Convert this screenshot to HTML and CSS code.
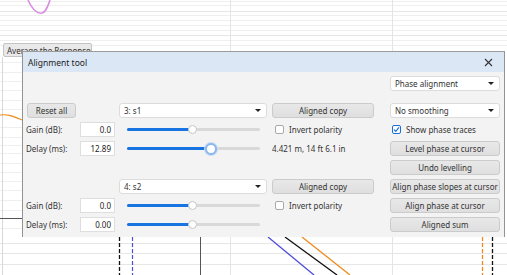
FILE: index.html
```html
<!DOCTYPE html>
<html lang="en">
<head>
<meta charset="UTF-8" />
<meta name="viewport" content="width=device-width, initial-scale=1" />
<title>Alignment tool</title>
<link rel="stylesheet" href="styles.css">
</head>
<body>
<div class="plot">
  <!-- the graph behind the dialog -->
  <svg class="chart" width="507" height="275" viewBox="0 0 507 275">
    <g stroke="#efefef" stroke-width="1">
      <line x1="0" y1="1.5" x2="507" y2="1.5"/>
      <line x1="0" y1="5.5" x2="507" y2="5.5"/>
      <line x1="0" y1="11.5" x2="507" y2="11.5" stroke="#e6e6e6"/>
      <line x1="0" y1="15.5" x2="507" y2="15.5"/>
      <line x1="0" y1="20.5" x2="507" y2="20.5"/>
      <line x1="0" y1="25.5" x2="507" y2="25.5"/>
      <line x1="0" y1="30.5" x2="507" y2="30.5"/>
      <line x1="0" y1="35.5" x2="507" y2="35.5" stroke="#e6e6e6"/>
      <line x1="0" y1="40.5" x2="507" y2="40.5"/>
      <line x1="0" y1="45.5" x2="507" y2="45.5"/>
      <line x1="0" y1="62.5" x2="22" y2="62.5"/>
      <line x1="0" y1="72.5" x2="22" y2="72.5"/>
      <line x1="0" y1="81.5" x2="22" y2="81.5"/>
      <line x1="0" y1="90.5" x2="22" y2="90.5"/>
      <line x1="0" y1="100.5" x2="22" y2="100.5"/>
      <line x1="0" y1="109.5" x2="22" y2="109.5"/>
      <line x1="0" y1="127.5" x2="22" y2="127.5"/>
      <line x1="0" y1="137.5" x2="22" y2="137.5"/>
      <line x1="0" y1="145.5" x2="22" y2="145.5"/>
      <line x1="0" y1="153.5" x2="22" y2="153.5"/>
      <line x1="0" y1="163.5" x2="22" y2="163.5"/>
      <line x1="0" y1="172.5" x2="22" y2="172.5"/>
      <line x1="0" y1="181.5" x2="22" y2="181.5"/>
      <line x1="0" y1="190.5" x2="22" y2="190.5"/>
      <line x1="0" y1="200.5" x2="22" y2="200.5"/>
      <line x1="0" y1="210.5" x2="22" y2="210.5"/>
      <line x1="0" y1="228.5" x2="22" y2="228.5"/>
      <line x1="0" y1="243.5" x2="507" y2="243.5" stroke="#e6e6e6"/>
      <line x1="0" y1="253.5" x2="507" y2="253.5" stroke="#e6e6e6"/>
      <line x1="0" y1="264.5" x2="507" y2="264.5" stroke="#e6e6e6"/>
      <line x1="230.5" y1="0" x2="230.5" y2="275" stroke="#e4e4e4"/>
      <line x1="392.5" y1="0" x2="392.5" y2="275" stroke="#e4e4e4"/>
      <line x1="2.5" y1="57" x2="2.5" y2="275" stroke="#d8d8d8"/>
    </g>
    <line x1="0" y1="218.5" x2="22" y2="218.5" stroke="#555"/>
    <line x1="200.5" y1="237" x2="200.5" y2="275" stroke="#555"/>
    <path d="M28 0 C32 9 37 14 42 13 C46 12 48 6 50 0" fill="none" stroke="#d98ae0" stroke-width="1.5"/>
    <path d="M0 115 C8 114 12 116 22 120" fill="none" stroke="#f08a1c" stroke-width="1.2"/>
    <line x1="119.5" y1="237" x2="119.5" y2="275" stroke="#111" stroke-width="1.3" stroke-dasharray="4 2"/>
    <line x1="132.5" y1="237" x2="132.5" y2="275" stroke="#4d4ddd" stroke-width="1.2" stroke-dasharray="4 2"/>
    <line x1="482.5" y1="237" x2="482.5" y2="275" stroke="#f08a1c" stroke-width="1.3" stroke-dasharray="4 2"/>
    <line x1="492.5" y1="237" x2="492.5" y2="275" stroke="#111" stroke-width="1.3" stroke-dasharray="4 2"/>
    <line x1="268" y1="237" x2="314" y2="275" stroke="#4d4ddd" stroke-width="1.3"/>
    <line x1="285" y1="237" x2="337" y2="275" stroke="#111" stroke-width="1.3"/>
    <line x1="302" y1="237" x2="350" y2="275" stroke="#f08a1c" stroke-width="1.3"/>
  </svg>

  <button class="avg-btn">Average the Responses</button>

  <section class="dialog">
    <header class="titlebar">
      <span>Alignment tool</span>
      <svg class="close" width="9" height="9" viewBox="0 0 9 9"><path d="M1 1 L8 8 M8 1 L1 8" stroke="#333" stroke-width="1.1"/></svg>
    </header>
    <div class="dialog-body">
      <div class="top-row">
        <div class="combo">Phase alignment</div>
      </div>
      <div class="controls">
        <!-- channel 1 -->
        <button class="btn reset">Reset all</button>
        <div class="combo c3">3: s1</div>
        <button class="btn copy">Aligned copy</button>
        <div class="combo c5">No smoothing</div>

        <span class="label">Gain (dB):</span>
        <div class="num">0.0</div>
        <div class="slider"><div class="fill" style="width: 49.6%"></div><div class="thumb" style="left: 49.6%"></div></div>
        <label class="check"><span class="box"></span>Invert polarity</label>
        <label class="check c5 right-check"><span class="box on"><svg width="7" height="7" viewBox="0 0 7 7"><path d="M1 3.6 L2.8 5.4 L6 1.4" fill="none" stroke="#1a6fd8" stroke-width="1.2"/></svg></span>Show phase traces</label>

        <span class="label">Delay (ms):</span>
        <div class="num">12.89</div>
        <div class="slider"><div class="fill" style="width: 63%"></div><div class="thumb focus" style="left: 63%"></div></div>
        <span class="dist">4.421 m, 14 ft 6.1 in</span>
        <button class="btn c5">Level phase at cursor</button>

        <button class="btn c5">Undo levelling</button>

        <!-- channel 2 -->
        <div class="combo c3">4: s2</div>
        <button class="btn copy">Aligned copy</button>
        <button class="btn c5">Align phase slopes at cursor</button>

        <span class="label">Gain (dB):</span>
        <div class="num">0.0</div>
        <div class="slider"><div class="fill" style="width: 49.6%"></div><div class="thumb" style="left: 49.6%"></div></div>
        <label class="check"><span class="box"></span>Invert polarity</label>
        <button class="btn c5">Align phase at cursor</button>

        <span class="label">Delay (ms):</span>
        <div class="num">0.00</div>
        <div class="slider"><div class="fill" style="width: 49.6%"></div><div class="thumb" style="left: 49.6%"></div></div>
        <button class="btn c5">Aligned sum</button>
      </div>
    </div>
  </section>
</div>
</body>
</html>
```

FILE: styles.css
```css
body {
  margin: 0; font-family: "Noto Sans", "Open Sans", sans-serif; font-size: 8px; color: #262626; background: #fff;
}
.plot {
  position: relative; width: 507px; height: 275px; overflow: hidden;
}
.chart {
  display: block;
}
.avg-btn {
  position: absolute; left: 3px; top: 43px; width: 89px; height: 14px;
  padding: 0 0 0 3px; text-align: left; white-space: nowrap; overflow: hidden;
  font: inherit; color: #333; background: #e9e9e9; border: 1px solid #c4c4c4; border-radius: 2px;
}
.dialog {
  position: absolute; left: 22px; top: 51px; width: 483px; height: 186px; box-sizing: border-box;
  background: #f3f3f3; border: 1px solid #939393; border-top: 1px solid #9b9b9b; border-bottom: none;
}
.titlebar {
  height: 20px; background: #dce7f6; display: flex; align-items: center; justify-content: space-between;
  padding: 0 11px 0 5px; font-size: 8.5px; color: #222;
}
.close {
  display: block;
}
.dialog-body {
  padding: 4px 4px 0 3px;
}
.top-row {
  display: flex; justify-content: flex-end; margin-bottom: 12px;
}
.top-row .combo {
  width: 110px;
}
.controls {
  display: grid;
  grid-template-columns: 50px 35px 148px 115px 110px;
  grid-auto-rows: 15px;
  column-gap: 4px;
  row-gap: 4px;
  align-items: center;
}
.c3 { grid-column: 3; }
.c5 { grid-column: 5; }

.combo {
  position: relative; height: 15px; box-sizing: border-box; padding: 0 0 0 4px;
  background: #fff; border: 1px solid #dcdcdc; border-radius: 3px;
  display: flex; align-items: center; color: #333;
}
.combo::after {
  content: ''; position: absolute; right: 5px; top: 5px;
  border-left: 3px solid transparent; border-right: 3px solid transparent; border-top: 3px solid #222;
}
.btn {
  height: 15px; box-sizing: border-box; padding: 0; font: inherit; color: #333;
  background: linear-gradient(#e8e8e8, #dfdfdf); border: 1px solid #cbcbcb; border-radius: 3px;
  white-space: nowrap;
}
.reset {
  grid-column: 1; width: 49px; margin-left: 1px;
}
.copy {
  grid-column: 4; width: 102px; margin-left: 1px;
}
.label {
  grid-column: 1; color: #333; white-space: nowrap;
}
.num {
  grid-column: 2; height: 15px; box-sizing: border-box; padding-right: 3px;
  background: #fff; border: 1px solid #dedede; text-align: right; line-height: 13px; color: #222;
}
.slider {
  grid-column: 3; position: relative; height: 3px; margin: 0 7px 0 8px;
  background: #d9d9d9; border-radius: 2px;
}
.slider .fill {
  height: 100%; background: #1874e0; border-radius: 2px;
}
.slider .thumb {
  position: absolute; top: -3px; width: 9px; height: 9px; margin-left: -4.5px; box-sizing: border-box;
  background: #fff; border: 1px solid #c6c6c6; border-radius: 50%;
}
.slider .thumb.focus {
  top: -4.5px; width: 12px; height: 12px; margin-left: -6px;
  border: 2px solid #8ab6ee; box-shadow: 0 0 0 1px #c8dcf6;
}
.check {
  grid-column: 4; display: flex; align-items: center; gap: 5px; padding-left: 4px; color: #333; white-space: nowrap;
}
.right-check {
  grid-column: 5; padding-left: 2px;
}
.box {
  width: 9px; height: 9px; box-sizing: border-box; background: #fff;
  border: 1px solid #a9a9a9; border-radius: 2px; display: flex; align-items: center; justify-content: center;
}
.box.on {
  border-color: #1a6fd8;
}
.dist {
  grid-column: 4; padding-left: 1px; color: #333; white-space: nowrap;
}
```
